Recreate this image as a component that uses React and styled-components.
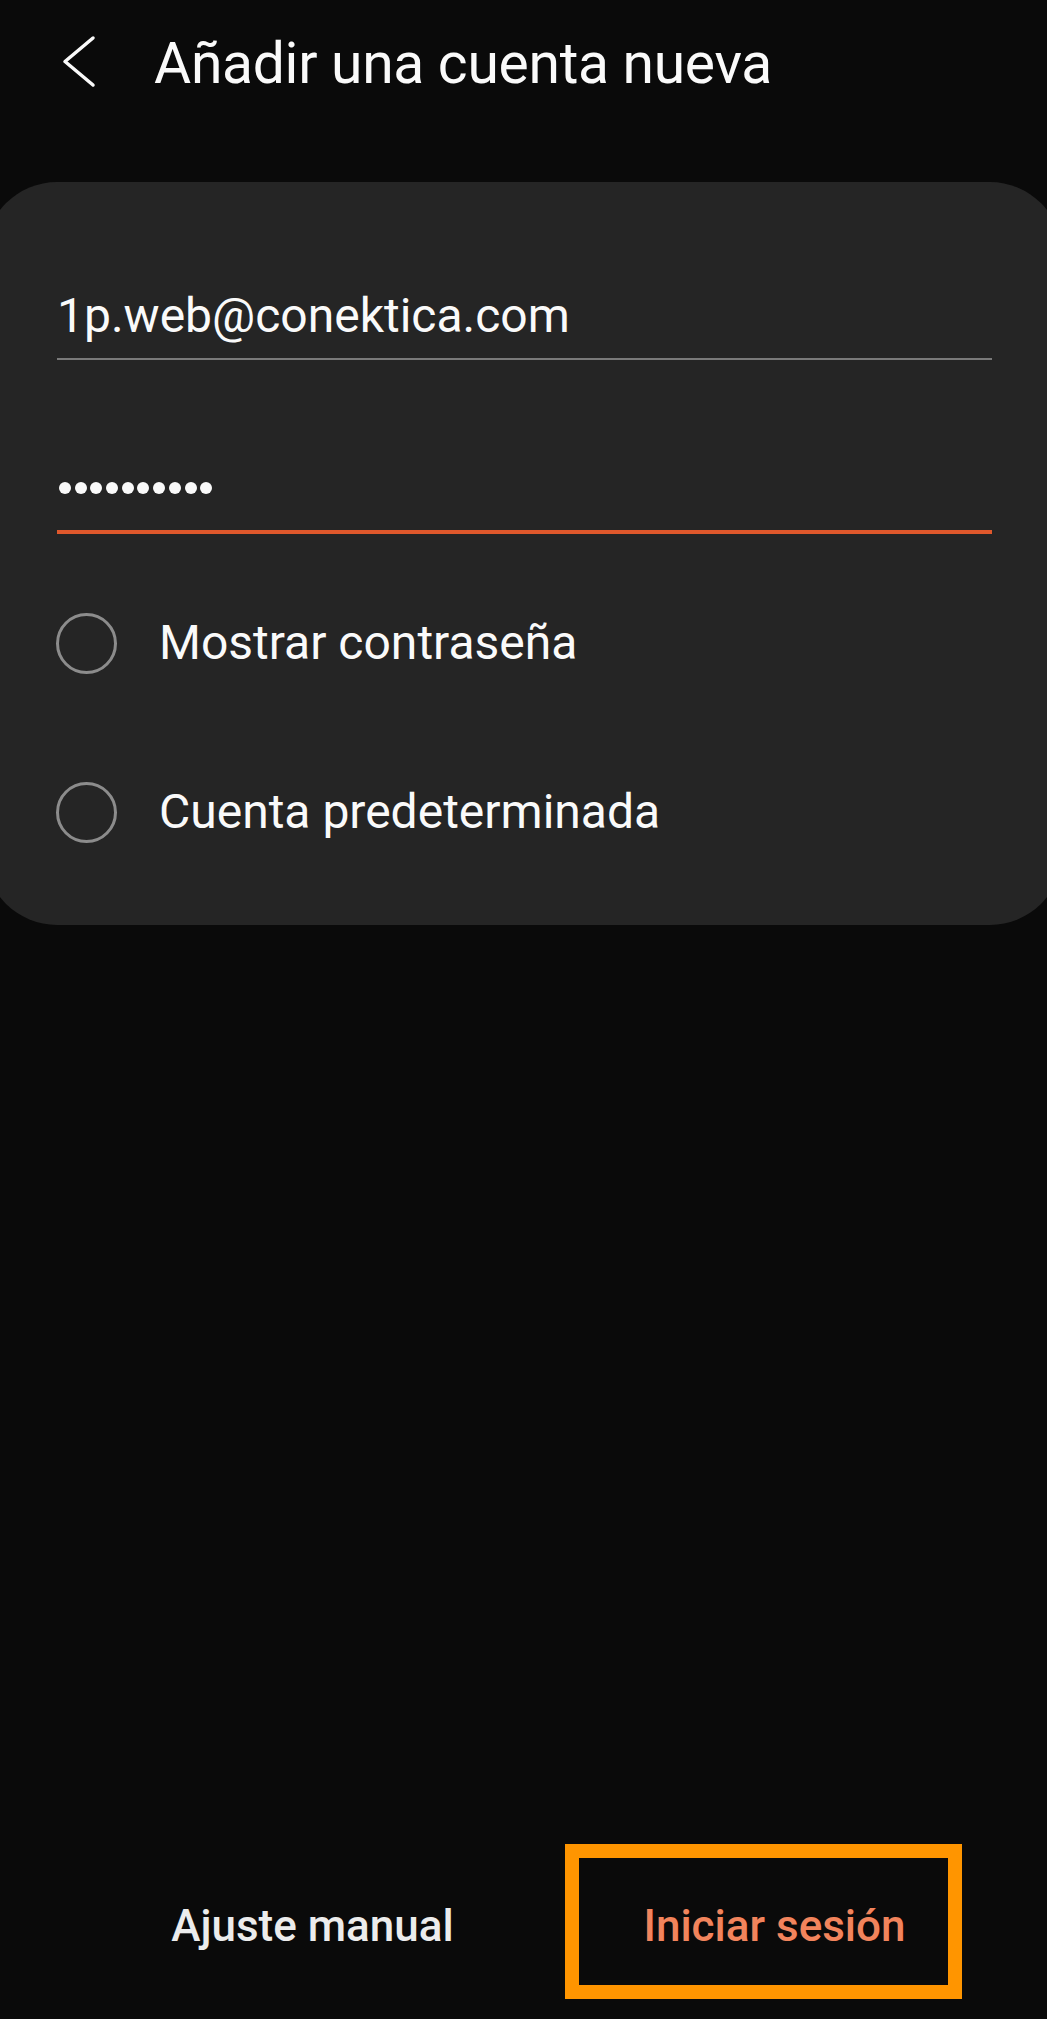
import React from 'react';
import styled, { createGlobalStyle } from 'styled-components';

const GlobalStyle = createGlobalStyle`
  html, body {
    margin: 0;
    padding: 0;
    background: #0a0a0a;
    overflow-x: hidden;
  }
  * {
    box-sizing: border-box;
  }
`;

const Screen = styled.div`
  display: flex;
  flex-direction: column;
  min-height: 100vh;
  background: #0a0a0a;
  color: #fafafa;
  font-family: Roboto, 'Noto Sans', sans-serif;
`;

const Header = styled.header`
  display: flex;
  align-items: center;
  gap: 54px;
  height: 128px;
  padding-left: 60px;
`;

const BackButton = styled.button`
  display: flex;
  padding: 0;
  border: 0;
  background: none;
  color: #fafafa;
  cursor: pointer;
`;

const Title = styled.h1`
  margin: 0;
  font-size: 57px;
  font-weight: 400;
  line-height: 64px;
  letter-spacing: -0.3px;
`;

const Card = styled.section`
  width: calc(100% + 30px);
  margin: 54px 0 0 -15px;
  padding: 106px 70px 73px 72px;
  background: #252525;
  border-radius: 72px;
`;

const Field = styled.div`
  display: flex;
  align-items: center;
  height: ${props => props.$height}px;
  padding-bottom: 14px;
  border-bottom: ${props => (props.$active ? '4px solid #e0582c' : '2px solid #7a7a7a')};
  font-size: 48px;
  line-height: 56px;
  & + & {
    margin-top: 100px;
  }
`;

const Dots = styled.div`
  display: flex;
  gap: 3.7px;
  padding-left: 2px;
`;

const Dot = styled.span`
  width: 12px;
  height: 12px;
  border-radius: 50%;
  background: #fafafa;
`;

const Options = styled.div`
  display: flex;
  flex-direction: column;
  gap: 89px;
  margin-top: 69px;
`;

const Option = styled.label`
  display: flex;
  align-items: center;
  gap: 42px;
  height: 80px;
  font-size: 48px;
  line-height: 56px;
  cursor: pointer;
`;

const Radio = styled.span`
  flex: none;
  width: 61px;
  height: 61px;
  margin-left: -1px;
  border: 3px solid #8c8c8c;
  border-radius: 50%;
`;

const Footer = styled.footer`
  display: flex;
  gap: 54px;
  margin-top: auto;
  padding: 0 0 20px 114px;
`;

const Action = styled.button`
  flex: none;
  width: 397px;
  height: 155px;
  padding: 8px 0 0 ${props => (props.$primary ? '22px' : '0')};
  border: ${props => (props.$highlight ? '14px solid #ff9500' : '0')};
  background: none;
  color: ${props => (props.$primary ? '#f2845c' : '#ececec')};
  font-family: Roboto, 'Noto Sans', sans-serif;
  font-size: 44px;
  font-weight: 500;
  cursor: pointer;
`;

export default function App() {
  return (
    <>
      <GlobalStyle />
      <Screen>
        <Header>
          <BackButton aria-label="Atrás">
            <svg width="40" height="60" viewBox="0 0 40 60" fill="none">
              <polyline
                points="33,4 5,27.5 33,51"
                stroke="currentColor"
                strokeWidth="3.5"
                strokeLinecap="round"
                strokeLinejoin="round"
              />
            </svg>
          </BackButton>
          <Title>Añadir una cuenta nueva</Title>
        </Header>

        <Card>
          <Field $height={72}>1p.web@conektica.com</Field>
          <Field $height={74} $active>
            <Dots>
              {Array.from({ length: 10 }, (_, i) => (
                <Dot key={i} />
              ))}
            </Dots>
          </Field>

          <Options>
            <Option>
              <Radio />
              Mostrar contraseña
            </Option>
            <Option>
              <Radio />
              Cuenta predeterminada
            </Option>
          </Options>
        </Card>

        <Footer>
          <Action>Ajuste manual</Action>
          <Action $primary $highlight>Iniciar sesión</Action>
        </Footer>
      </Screen>
    </>
  );
}
